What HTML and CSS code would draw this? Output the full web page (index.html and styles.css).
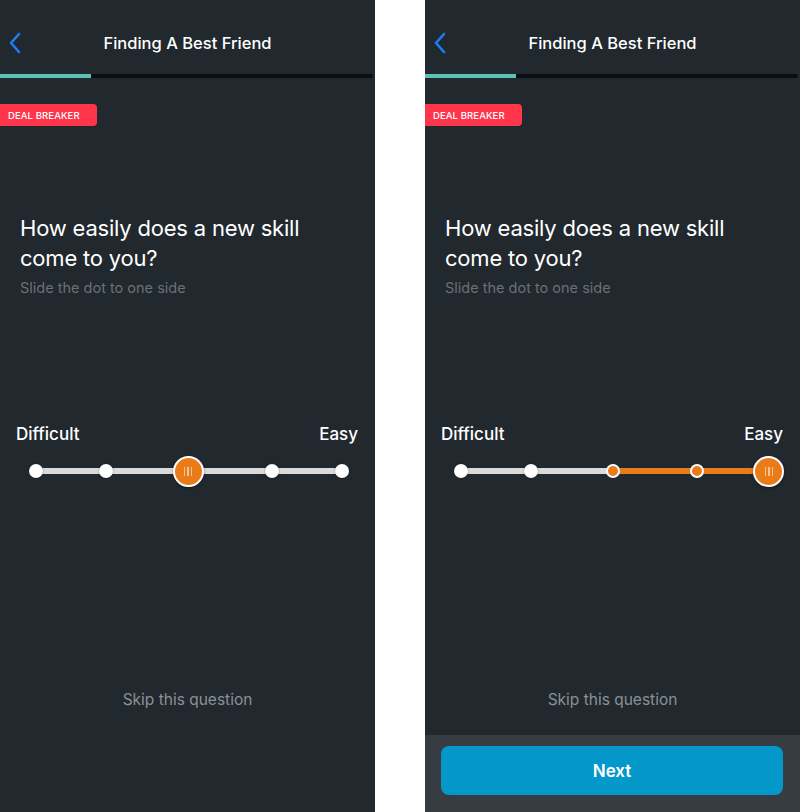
FILE: index.html
```html
<!DOCTYPE html>
<html lang="en">
<head>
    <meta charset="UTF-8">
    <meta name="viewport" content="width=device-width, initial-scale=1.0">
    <title>Finding A Best Friend</title>
    <link rel="stylesheet" href="styles.css">
</head>
<body>

<!-- Screen 1: thumb in the middle -->
<div class="phone">
    <header class="nav">
        <svg class="back" width="14" height="22" viewBox="0 0 14 22">
            <path d="M11 2 L3 11 L11 20" fill="none" stroke="#1a7ff0" stroke-width="2.6" stroke-linecap="round" stroke-linejoin="round"/>
        </svg>
        <h1>Finding A Best Friend</h1>
        <span></span>
    </header>
    <div class="progress"><div class="progress-fill" style="width: 91px"></div></div>

    <div class="badge">DEAL BREAKER</div>

    <div class="question">
        <h2>How easily does a new skill come to you?</h2>
        <p>Slide the dot to one side</p>
    </div>

    <div class="scale">
        <div class="scale-labels">
            <span>Difficult</span>
            <span>Easy</span>
        </div>
        <div class="slider">
            <div class="track"></div>
            <span class="stop" style="left: 0%"></span>
            <span class="stop" style="left: 22.9%"></span>
            <span class="stop" style="left: 77.1%"></span>
            <span class="stop" style="left: 100%"></span>
            <span class="thumb" style="left: 49.7%"><i></i><i></i><i></i></span>
        </div>
    </div>

    <div class="skip">Skip this question</div>
    <div class="footer"></div>
</div>

<!-- Screen 2: thumb on Easy -->
<div class="phone">
    <header class="nav">
        <svg class="back" width="14" height="22" viewBox="0 0 14 22">
            <path d="M11 2 L3 11 L11 20" fill="none" stroke="#1a7ff0" stroke-width="2.6" stroke-linecap="round" stroke-linejoin="round"/>
        </svg>
        <h1>Finding A Best Friend</h1>
        <span></span>
    </header>
    <div class="progress"><div class="progress-fill" style="width: 91px"></div></div>

    <div class="badge">DEAL BREAKER</div>

    <div class="question">
        <h2>How easily does a new skill come to you?</h2>
        <p>Slide the dot to one side</p>
    </div>

    <div class="scale">
        <div class="scale-labels">
            <span>Difficult</span>
            <span>Easy</span>
        </div>
        <div class="slider">
            <div class="track"></div>
            <div class="track-active" style="left: 49.7%; right: 0"></div>
            <span class="stop" style="left: 0%"></span>
            <span class="stop" style="left: 22.9%"></span>
            <span class="stop active" style="left: 49.7%"></span>
            <span class="stop active" style="left: 77.1%"></span>
            <span class="thumb" style="left: 100.6%"><i></i><i></i><i></i></span>
        </div>
    </div>

    <div class="skip">Skip this question</div>
    <div class="footer filled">
        <button type="button">Next</button>
    </div>
</div>

</body>
</html>
```

FILE: styles.css
```css
body {
    margin: 0;
    background-color: #fff;
    display: flex;
    gap: 50px;
    font-family: Inter, "Open Sans", sans-serif;
    -webkit-font-smoothing: antialiased;
}

.phone {
    width: 375px;
    height: 812px;
    background-color: #21282e;
    display: flex;
    flex-direction: column;
    overflow: hidden;
}

/* Navigation bar */
.nav {
    height: 62px;
    padding-top: 12px;
    display: grid;
    grid-template-columns: 1fr auto 1fr;
    align-items: center;
}

.nav .back {
    margin-left: 8px;
}

.nav h1 {
    margin: 0;
    font-size: 16.5px;
    font-weight: 500;
    color: #fff;
    letter-spacing: 0;
}

.progress {
    height: 4px;
    background-color: #0c0f11;
    margin-right: 2px;
    border-radius: 0 2px 2px 0;
}

.progress-fill {
    height: 100%;
    background-color: #5cc2b5;
}

/* Deal breaker tag */
.badge {
    margin-top: 26px;
    width: 89px;
    height: 22px;
    padding-left: 8px;
    display: flex;
    align-items: center;
    background-color: #ff354b;
    color: #fff;
    font-size: 9.5px;
    font-weight: 500;
    letter-spacing: 0.1px;
    border-radius: 0 4px 4px 0;
}

/* Question */
.question {
    margin-top: 87px;
    padding: 0 20px;
}

.question h2 {
    margin: 0;
    font-size: 22px;
    font-weight: 400;
    line-height: 30px;
    color: #fff;
    letter-spacing: -0.2px;
    max-width: 300px;
}

.question p {
    margin: 5px 0 0;
    font-size: 14.5px;
    line-height: 20px;
    color: #6b7177;
}

/* Slider scale */
.scale {
    margin-top: 126px;
}

.scale-labels {
    display: flex;
    justify-content: space-between;
    padding: 0 17px 0 16px;
    font-size: 17px;
    font-weight: 500;
    line-height: 20px;
    color: #fff;
}

.slider {
    position: relative;
    height: 30px;
    margin: 12px 33px 0 36px;
}

.track,
.track-active {
    position: absolute;
    top: 12px;
    height: 6px;
    border-radius: 3px;
}

.track {
    left: 0;
    right: 0;
    background-color: #dadada;
}

.track-active {
    background-color: #ea7b19;
}

.stop {
    position: absolute;
    top: 8px;
    width: 14px;
    height: 14px;
    margin-left: -7px;
    border-radius: 50%;
    background-color: #fff;
    box-shadow: 0 0 2px rgba(0, 0, 0, 0.45);
    box-sizing: border-box;
}

.stop.active {
    background-color: #ea7b19;
    border: 2px solid #fff;
    box-shadow: none;
}

.thumb {
    position: absolute;
    top: 0;
    width: 31px;
    height: 31px;
    margin-left: -15.5px;
    box-sizing: border-box;
    border: 2px solid #fff;
    border-radius: 50%;
    background-color: #ea7b19;
    display: flex;
    align-items: center;
    justify-content: center;
    gap: 2px;
    box-shadow: 0 1px 3px rgba(0, 0, 0, 0.35);
}

.thumb i {
    width: 1.5px;
    height: 9px;
    background-color: rgba(255, 220, 185, 0.75);
}

/* Bottom */
.skip {
    margin-top: auto;
    margin-bottom: 25px;
    text-align: center;
    font-size: 15.5px;
    line-height: 20px;
    color: #8b9096;
}

.footer {
    height: 77px;
    box-sizing: border-box;
    padding: 11px 17px 0 16px;
}

.footer.filled {
    background-color: #373b42;
}

.footer button {
    width: 100%;
    height: 49px;
    border: none;
    border-radius: 8px;
    background-color: #0497ca;
    color: #fff;
    font-family: inherit;
    font-size: 17px;
    font-weight: 600;
    cursor: pointer;
}
```
